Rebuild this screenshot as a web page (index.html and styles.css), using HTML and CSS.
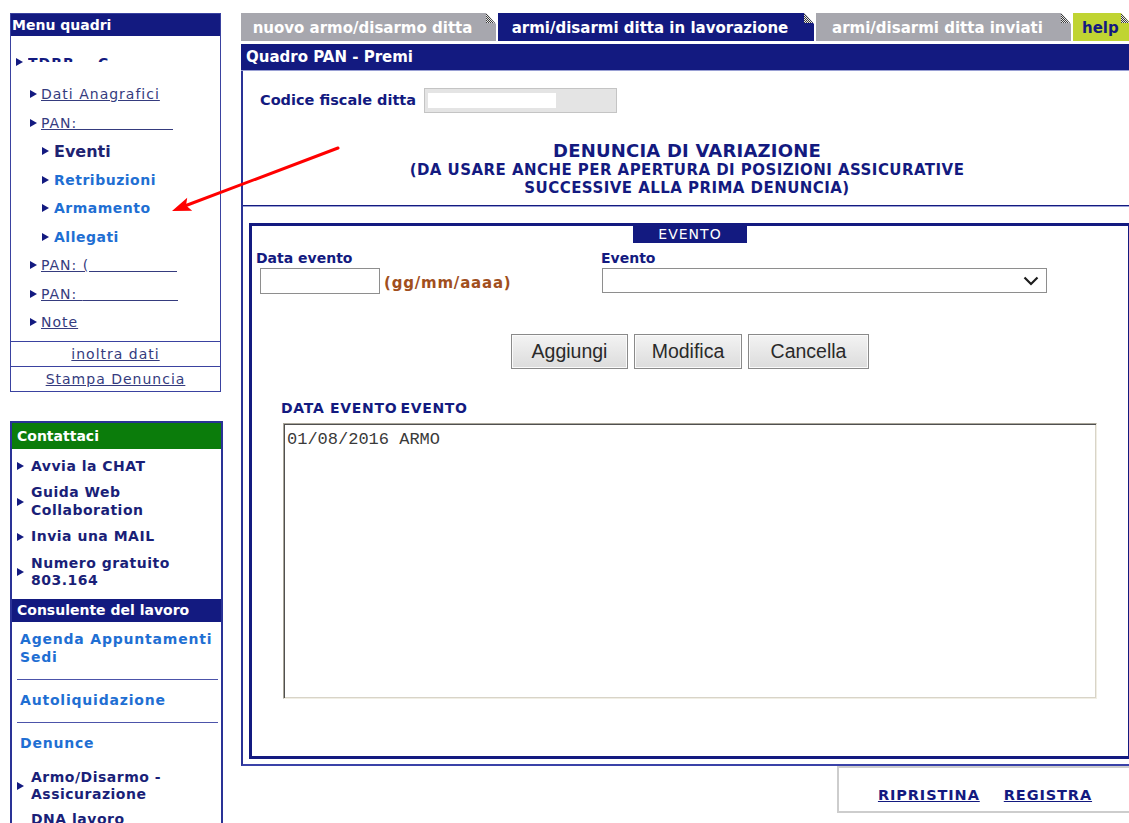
FILE: index.html
```html
<!DOCTYPE html>
<html lang="it">
<head>
<meta charset="utf-8">
<title>Quadro PAN - Premi</title>
<link rel="stylesheet" href="styles.css">
</head>
<body>
<div class="page">
  <aside class="sidebar">
    <nav class="menu-box">
      <div class="box-title">Menu quadri</div>
      <ul class="menu-list">
        <li class="lvl0 first"><span class="tri"></span><span class="masked">TDRR</span><span class="masked frag">.C. .</span></li>
        <li class="lvl1"><span class="tri"></span><a href="#" class="mlink">Dati Anagrafici</a></li>
        <li class="lvl1"><span class="tri"></span><a href="#" class="mlink">PAN:<span class="blank w1"></span></a></li>
        <li class="lvl2"><span class="tri"></span><span class="current">Eventi</span></li>
        <li class="lvl2"><span class="tri"></span><a href="#" class="sublink">Retribuzioni</a></li>
        <li class="lvl2"><span class="tri"></span><a href="#" class="sublink">Armamento</a></li>
        <li class="lvl2"><span class="tri"></span><a href="#" class="sublink">Allegati</a></li>
        <li class="lvl1"><span class="tri"></span><a href="#" class="mlink">PAN: (<span class="blank w2"></span></a></li>
        <li class="lvl1"><span class="tri"></span><a href="#" class="mlink">PAN: <span class="blank w3"></span></a></li>
        <li class="lvl1"><span class="tri"></span><a href="#" class="mlink">Note</a></li>
      </ul>
      <div class="menu-action"><a href="#" class="mlink">inoltra dati</a></div>
      <div class="menu-action"><a href="#" class="mlink">Stampa Denuncia</a></div>
    </nav>

    <section class="contact-box">
      <div class="box-title green">Contattaci</div>
      <ul class="contact-list">
        <li><span class="tri"></span><a href="#">Avvia la CHAT</a></li>
        <li><span class="tri"></span><a href="#">Guida Web<br>Collaboration</a></li>
        <li><span class="tri"></span><a href="#">Invia una MAIL</a></li>
        <li><span class="tri"></span><a href="#">Numero gratuito<br>803.164</a></li>
      </ul>
      <div class="box-title tall">Consulente del lavoro</div>
      <div class="service"><a href="#" class="svc-link">Agenda Appuntamenti<br>Sedi</a></div>
      <div class="service"><a href="#" class="svc-link">Autoliquidazione</a></div>
      <div class="service open">
        <a href="#" class="svc-link">Denunce</a>
        <ul class="contact-list sub">
          <li><span class="tri"></span><a href="#">Armo/Disarmo -<br>Assicurazione</a></li>
          <li class="no-tri"><a href="#">DNA lavoro</a></li>
        </ul>
      </div>
    </section>
  </aside>

  <main class="main">
    <div class="tabs">
      <a href="#" class="tab off">nuovo armo/disarmo ditta<svg class="fold" viewBox="0 0 13 12"><use href="#fold"/></svg></a>
      <a href="#" class="tab on">armi/disarmi ditta in lavorazione<svg class="fold" viewBox="0 0 13 12"><use href="#fold"/></svg></a>
      <a href="#" class="tab off">armi/disarmi ditta inviati<svg class="fold" viewBox="0 0 13 12"><use href="#fold"/></svg></a>
      <a href="#" class="tab help">help<svg class="fold" viewBox="0 0 13 12"><use href="#fold"/></svg></a>
    </div>

    <section class="panel">
      <h1 class="panel-title">Quadro PAN - Premi</h1>
      <div class="panel-body">
        <div class="intro">
          <div class="cf-row">
            <label class="cf-label">Codice fiscale ditta</label>
            <span class="cf-input"><span class="whiteout"></span></span>
          </div>
          <div class="heading">
            <div class="h-main">DENUNCIA DI VARIAZIONE</div>
            <div class="h-sub">(DA USARE ANCHE PER APERTURA DI POSIZIONI ASSICURATIVE<br>SUCCESSIVE ALLA PRIMA DENUNCIA)</div>
          </div>
        </div>

        <div class="evento">
          <div class="evento-tag">EVENTO</div>
          <div class="fields">
            <div class="field field-date">
              <label class="f-label">Data evento</label>
              <div class="date-row">
                <span class="input date-input"></span>
                <span class="hint">(gg/mm/aaaa)</span>
              </div>
            </div>
            <div class="field field-event">
              <label class="f-label">Evento</label>
              <div class="select">
                <svg class="chev" viewBox="0 0 16 10"><path d="M1.5 1.5 L8 8 L14.5 1.5" fill="none" stroke="#1e1e1e" stroke-width="2.2"/></svg>
              </div>
            </div>
          </div>
          <div class="buttons">
            <button class="btn b-add">Aggiungi</button>
            <button class="btn b-mod">Modifica</button>
            <button class="btn b-del">Cancella</button>
          </div>
          <div class="list-label"><span>DATA EVENTO</span><span class="col2">EVENTO</span></div>
          <textarea class="event-list" readonly>01/08/2016 ARMO</textarea>
        </div>
      </div>
    </section>

    <div class="actions">
      <div class="actions-box">
        <a href="#" class="act">RIPRISTINA</a>
        <a href="#" class="act">REGISTRA</a>
      </div>
    </div>
  </main>

  <svg class="arrow" viewBox="165 140 180 80" width="180" height="80">
    <line x1="338" y1="148" x2="186" y2="205.5" stroke="#ff0000" stroke-width="3" stroke-linecap="round"/>
    <polygon points="172,211 187.2,197.7 186,205.6 192.2,210.7" fill="#ff0000"/>
  </svg>

  <svg class="defs" width="0" height="0" aria-hidden="true">
    <defs>
      <pattern id="dots" width="2" height="2" patternUnits="userSpaceOnUse">
        <rect width="2" height="2" fill="#e8e8e8"/>
        <rect width="1" height="1" fill="#3a3a3a"/>
        <rect x="1" y="1" width="1" height="1" fill="#3a3a3a"/>
      </pattern>
      <g id="fold">
        <polygon points="3,0 13,0 13,11" fill="#ffffff"/>
        <polygon points="3,0 3,10 12,10" fill="url(#dots)"/>
      </g>
    </defs>
  </svg>
</div>
</body>
</html>
```

FILE: styles.css
```css
* { box-sizing: border-box; }

html, body {
  margin: 0;
  padding: 0;
  overflow: hidden;
  background: #fff;
}

body {
  font-family: "DejaVu Sans", Verdana, sans-serif;
  font-size: 14px;
  color: #131a80;
}

a { color: inherit; }
ul { list-style: none; margin: 0; padding: 0; }

.page {
  position: relative;
  display: flex;
  align-items: flex-start;
  gap: 18px;
  width: 1131px;
  padding: 13px 0 0 10px;
}

/* ---------- sidebar ---------- */
.sidebar {
  flex: none;
  width: 213px;
  display: flex;
  flex-direction: column;
  align-items: flex-start;
  gap: 29px;
}

.box-title {
  background: #131a80;
  color: #fff;
  font-weight: bold;
  height: 22px;
  line-height: 22px;
  padding-left: 1px;
  white-space: nowrap;
}
.box-title.green {
  background: #0b7c0b;
  height: 26px;
  line-height: 26px;
  padding-left: 5px;
}
.box-title.tall {
  height: 23px;
  line-height: 23px;
  padding-left: 5px;
}

.tri {
  flex: none;
  width: 0;
  height: 0;
  border-left: 7px solid #131a80;
  border-top: 4px solid transparent;
  border-bottom: 4px solid transparent;
}

.menu-box {
  width: 211px;
  border: 1px solid #3a42a0;
}

.menu-list { padding: 12px 0 4px; }
.menu-list li {
  display: flex;
  align-items: center;
  height: 28.5px;
  white-space: nowrap;
}
.menu-list li.first { margin-bottom: 3.5px; }
.lvl0 { padding-left: 5px; }
.lvl1 { padding-left: 19px; }
.lvl2 { padding-left: 31px; }
.lvl0 .tri { margin-right: 5px; }
.lvl1 .tri { margin-right: 4px; }
.lvl2 .tri { margin-right: 5px; }

.masked {
  height: 6px;
  overflow: hidden;
  line-height: 15px;
  font-weight: bold;
  margin-bottom: 7px;
  letter-spacing: 1px;
}
.masked.frag { margin-left: 12px; letter-spacing: 6px; }

.mlink {
  color: #353b7e;
  letter-spacing: 1px;
}
.blank {
  display: inline-block;
  height: 1px;
  background: #353b7e;
  vertical-align: -2px;
}
.blank.w1 { width: 96px; }
.blank.w2 { width: 88px; }
.blank.w3 { width: 95px; }

.current {
  font-weight: bold;
  font-size: 16px;
  color: #1e2372;
}
.sublink {
  font-weight: bold;
  color: #1f6fd3;
  text-decoration: none;
  letter-spacing: 0.5px;
}

.menu-action {
  border-top: 1px solid #3a42a0;
  height: 25px;
  line-height: 25px;
  text-align: center;
}

.contact-box {
  width: 213px;
  border: 2px solid #2a3296;
  border-bottom: none;
}
.contact-list { padding: 4.5px 0; }
.contact-list li {
  display: flex;
  align-items: center;
  gap: 7px;
  padding: 4.5px 5px;
  line-height: 17.5px;
  font-weight: bold;
  font-size: 14px;
  letter-spacing: 0.5px;
}
.contact-list a { text-decoration: none; color: #1a1f78; }

.service {
  margin: 0 3px 0 5px;
  padding: 8px 3px 13px;
  border-bottom: 1px solid #4c54aa;
}
.service + .service { padding-top: 11px; }
.service.open { border-bottom: none; padding: 11px 0 0 0; }
.service.open > .svc-link { padding-left: 3px; display: block; }
.svc-link {
  font-weight: bold;
  color: #1f6fd3;
  text-decoration: none;
  line-height: 18px;
  letter-spacing: 0.8px;
}
.contact-list.sub { padding-top: 12.5px; }
.contact-list.sub li { padding-left: 0; }
.contact-list.sub li.no-tri { padding-left: 14px; padding-top: 2.5px; }

/* ---------- main ---------- */
.main {
  flex: none;
  width: 890px;
}

.tabs {
  display: flex;
  gap: 2px;
  height: 28px;
}
.tab {
  position: relative;
  display: flex;
  align-items: center;
  justify-content: center;
  padding-right: 12px;
  padding-top: 1px;
  font-size: 15px;
  font-weight: bold;
  color: #fff;
  text-decoration: none;
  white-space: nowrap;
}
.tab.off { background: #a7a7ae; width: 255px; }
.tab.on { background: #131a80; width: 316px; }
.tab.help {
  background: #c0d432;
  color: #131a80;
  flex: 1;
  justify-content: flex-start;
  padding-left: 9px;
}
.fold {
  position: absolute;
  top: 0;
  right: 0;
  width: 13px;
  height: 12px;
}

.panel { margin-top: 3px; }
.panel-title {
  margin: 0;
  height: 27px;
  line-height: 27px;
  padding-left: 5px;
  background: #131a80;
  color: #fff;
  font-size: 15px;
  font-weight: bold;
  border-bottom: 1px solid #9aa0d4;
}
.panel-body {
  border-left: 2px solid #2a3296;
  border-bottom: 2px solid #3a42a8;
  padding-bottom: 5px;
}

.intro {
  padding: 16px 0 8px 17px;
  border-bottom: 1px solid #131a80;
  box-shadow: 0 1px 0 #9aa0d4;
}
.cf-row {
  display: flex;
  align-items: center;
  gap: 8px;
  height: 26px;
}
.cf-label {
  font-weight: bold;
  font-size: 14.5px;
}
.cf-input {
  display: flex;
  align-items: center;
  width: 193px;
  height: 25px;
  background: #e4e4e4;
  border: 1px solid #c4c4c4;
  padding-left: 3px;
}
.whiteout {
  width: 128px;
  height: 15px;
  background: #fff;
}

.heading {
  margin: 28px 0 0 -17px;
  text-align: center;
  font-weight: bold;
}
.h-main {
  font-size: 18px;
  line-height: 20px;
  letter-spacing: 0.2px;
}
.h-sub {
  font-size: 15px;
  line-height: 18px;
  letter-spacing: 0.45px;
}

.evento {
  margin: 17px 0 0 6px;
  border: 3px solid #131a80;
  padding-bottom: 57px;
}
.evento-tag {
  width: 114px;
  height: 17px;
  line-height: 17px;
  margin: 0 auto;
  background: #131a80;
  color: #fff;
  text-align: center;
  letter-spacing: 1px;
}

.fields {
  display: flex;
  margin-top: 6px;
  padding-left: 4px;
}
.field-date { width: 345px; }
.f-label {
  display: block;
  font-weight: bold;
  font-size: 14px;
  line-height: 16px;
  padding-top: 1px;
}
.field-event .f-label { margin-top: 1px; line-height: 15px; }
.date-row {
  display: flex;
  align-items: center;
  margin: 2px 0 0 4px;
}
.input {
  border: 1px solid #8e8e8e;
  background: #fff;
}
.date-input {
  width: 120px;
  height: 26px;
}
.hint {
  margin: 4px 0 0 4px;
  color: #a14f1d;
  font-weight: bold;
  font-size: 15px;
  letter-spacing: 0.8px;
}
.select {
  position: relative;
  display: flex;
  align-items: center;
  justify-content: flex-end;
  width: 445px;
  height: 25px;
  margin: 2px 0 0 1px;
  border: 1px solid #8e8e8e;
  padding-right: 7px;
}
.chev { width: 16px; height: 10px; }

.buttons {
  display: flex;
  justify-content: center;
  gap: 6px;
  margin-top: 40px;
}
.btn {
  height: 35px;
  font-family: "Liberation Sans", Arial, sans-serif;
  font-size: 19.5px;
  color: #2a2a2a;
  background: linear-gradient(#f3f3f3, #dcdcdc);
  border: 1px solid #8a8a8a;
  box-shadow: inset 0 0 0 1px #fbfbfb;
  padding: 0;
}
.b-add { width: 117px; }
.b-mod { width: 108px; }
.b-del { width: 121px; }

.list-label {
  margin: 31px 0 0 29px;
  font-weight: bold;
  font-size: 14px;
  line-height: 16px;
  letter-spacing: 0.7px;
}
.list-label .col2 { margin-left: 3px; }

.event-list {
  display: block;
  width: 814px;
  height: 276px;
  margin: 7px 0 0 31px;
  padding: 6px 3px;
  resize: none;
  font-family: "Liberation Mono", "Courier New", monospace;
  font-size: 17px;
  line-height: 20px;
  color: #3a3a3a;
  background: #fff;
  border: 1px solid;
  border-color: #aaa69a #f1eee4 #f1eee4 #aaa69a;
  box-shadow: inset 1px 1px 0 #505050, inset -1px -1px 0 #d8d4c8;
  outline: none;
}

.actions {
  display: flex;
  justify-content: flex-end;
}
.actions-box {
  display: flex;
  justify-content: center;
  gap: 24px;
  width: 294px;
  height: 47px;
  padding-top: 19px;
  border: 2px solid #cdcdcd;
  border-right: none;
}
.act {
  font-weight: bold;
  font-size: 14.5px;
  line-height: 16px;
  letter-spacing: 0.9px;
  color: #131a80;
}

/* ---------- annotation ---------- */
.arrow {
  position: absolute;
  left: 165px;
  top: 140px;
}
.defs { position: absolute; }
```
